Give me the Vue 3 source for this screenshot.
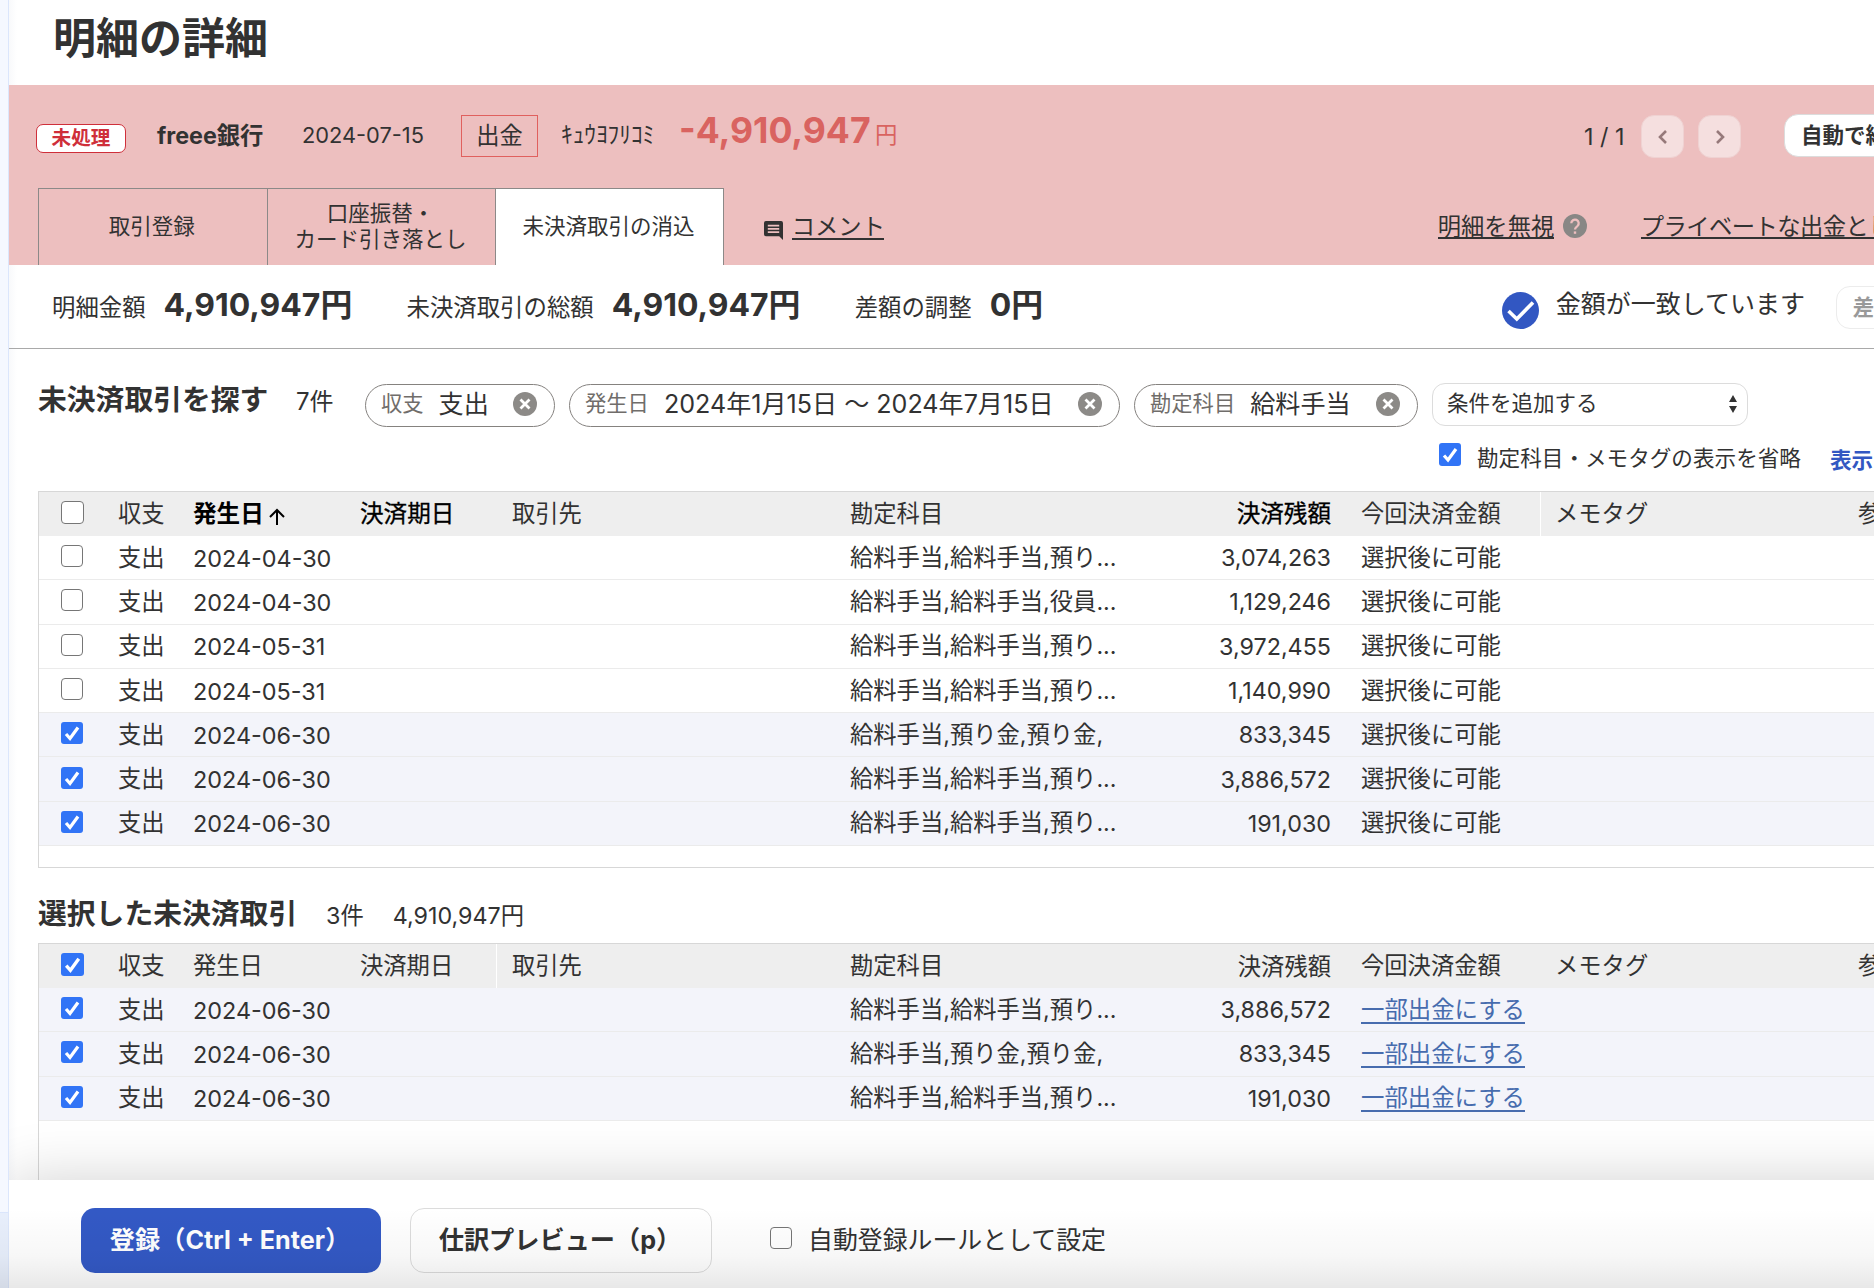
<script setup>
import { ref } from 'vue'

const filters = ref([
  { label: '収支', value: '支出', cls: 'chip-balance' },
  { label: '発生日', value: '2024年1月15日 〜 2024年7月15日', cls: 'chip-date' },
  { label: '勘定科目', value: '給料手当', cls: 'chip-account' },
])

const rows = ref([
  { date: '2024-04-30', account: '給料手当,給料手当,預り...', amount: '3,074,263', checked: false },
  { date: '2024-04-30', account: '給料手当,給料手当,役員...', amount: '1,129,246', checked: false },
  { date: '2024-05-31', account: '給料手当,給料手当,預り...', amount: '3,972,455', checked: false },
  { date: '2024-05-31', account: '給料手当,給料手当,預り...', amount: '1,140,990', checked: false },
  { date: '2024-06-30', account: '給料手当,預り金,預り金,', amount: '833,345', checked: true },
  { date: '2024-06-30', account: '給料手当,給料手当,預り...', amount: '3,886,572', checked: true },
  { date: '2024-06-30', account: '給料手当,給料手当,預り...', amount: '191,030', checked: true },
])

const selected = ref([
  { date: '2024-06-30', account: '給料手当,給料手当,預り...', amount: '3,886,572' },
  { date: '2024-06-30', account: '給料手当,預り金,預り金,', amount: '833,345' },
  { date: '2024-06-30', account: '給料手当,給料手当,預り...', amount: '191,030' },
])
</script>

<template>
  <div class="screen">
    <aside class="rail"><div class="rail-foot"></div></aside>

    <main class="main">
      <h1>明細の詳細</h1>

      <section class="statement">
        <div class="info">
          <span class="badge">未処理</span>
          <strong class="bank">freee銀行</strong>
          <span class="date">2024-07-15</span>
          <span class="kind">出金</span>
          <span class="memo">ｷｭｳﾖﾌﾘｺﾐ</span>
          <span class="amount">-4,910,947</span>
          <span class="yen">円</span>
          <span class="page">1 / 1</span>
          <button class="nav">
            <svg viewBox="0 0 24 24"><path d="M15 6l-6 6 6 6" /></svg>
          </button>
          <button class="nav">
            <svg viewBox="0 0 24 24"><path d="M9 6l6 6-6 6" /></svg>
          </button>
          <button class="auto">自動で経</button>
        </div>

        <div class="tabs">
          <div class="tab">取引登録</div>
          <div class="tab">口座振替・<br />カード引き落とし</div>
          <div class="tab active">未決済取引の消込</div>
          <svg class="comment-icon" viewBox="0 0 20 20">
            <path fill-rule="evenodd" d="M2 0h16a2 2 0 0 1 2 2v18l-4-4H2a2 2 0 0 1-2-2V2a2 2 0 0 1 2-2zM4 4v1.800h12V4zM4 7.400v1.800h12V7.400zM4 10.800v1.800h12v-1.800z" />
          </svg>
          <a class="comment">コメント</a>
          <a class="ignore">明細を無視</a>
          <svg class="help" viewBox="0 0 24 24">
            <circle cx="12" cy="12" r="12" />
            <path d="M8.300 9.300a3.700 3.700 0 1 1 6.200 2.700c-1.400 1.200-2.500 1.700-2.500 3.600" />
            <rect x="10.800" y="17.400" width="2.400" height="2.400" />
          </svg>
          <a class="private">プライベートな出金とし</a>
        </div>
      </section>

      <section class="summary">
        <span class="label">明細金額</span>
        <strong>4,910,947円</strong>
        <span class="label">未決済取引の総額</span>
        <strong>4,910,947円</strong>
        <span class="label">差額の調整</span>
        <strong>0円</strong>
        <svg class="ok" viewBox="0 0 37 37">
          <circle cx="18.500" cy="18.500" r="18.500" />
          <path d="M6.500 19l8.300 8L31 10.500" />
        </svg>
        <span class="match">金額が一致しています</span>
        <button class="adjust">差</button>
      </section>

      <section class="search">
        <h2>未決済取引を探す</h2>
        <span class="count">7件</span>
        <div v-for="f in filters" :key="f.label" class="chip" :class="f.cls">
          <small>{{ f.label }}</small>
          <span>{{ f.value }}</span>
          <svg viewBox="0 0 24 24">
            <circle cx="12" cy="12" r="12" />
            <path d="M7.500 7.500l9 9M16.500 7.500l-9 9" />
          </svg>
        </div>
        <div class="select">
          条件を追加する
          <svg viewBox="0 0 8 18"><path d="M4 0l4 7H0zM4 18l4-7H0z" /></svg>
        </div>
      </section>

      <div class="options">
        <span class="check on"><svg viewBox="0 0 22 22"><path d="M5 12l4 4.500L17 5.500" /></svg></span>
        <span class="omit">勘定科目・メモタグの表示を省略</span>
        <a>表示</a>
      </div>

      <div class="table candidates">
        <div class="row head">
          <span class="check big"></span>
          <span>収支</span>
          <span class="sorted">発生日<svg viewBox="0 0 16 17"><path d="M8 17V2M1 9l7-7 7 7" /></svg></span>
          <span class="due">決済期日</span>
          <span>取引先</span>
          <span>勘定科目</span>
          <span class="num due">決済残額</span>
          <span class="divided">今回決済金額</span>
          <span>メモタグ</span>
          <span>参</span>
        </div>
        <div v-for="(row, i) in rows" :key="i" class="row" :class="{ picked: row.checked }">
          <span class="check" :class="{ on: row.checked }">
            <svg v-if="row.checked" viewBox="0 0 22 22"><path d="M5 12l4 4.500L17 5.500" /></svg>
          </span>
          <span>支出</span>
          <span class="day">{{ row.date }}</span>
          <span></span>
          <span></span>
          <span>{{ row.account }}</span>
          <span class="num">{{ row.amount }}</span>
          <span>選択後に可能</span>
        </div>
      </div>

      <div class="chosen">
        <h2>選択した未決済取引</h2>
        <span>3件</span>
        <span class="total">4,910,947円</span>
      </div>

      <div class="table selection">
        <div class="row head">
          <span class="check on big"><svg viewBox="0 0 22 22"><path d="M5 12l4 4.500L17 5.500" /></svg></span>
          <span>収支</span>
          <span>発生日</span>
          <span class="divided">決済期日</span>
          <span>取引先</span>
          <span>勘定科目</span>
          <span class="num">決済残額</span>
          <span>今回決済金額</span>
          <span>メモタグ</span>
          <span>参</span>
        </div>
        <div v-for="(row, i) in selected" :key="i" class="row picked">
          <span class="check on"><svg viewBox="0 0 22 22"><path d="M5 12l4 4.500L17 5.500" /></svg></span>
          <span>支出</span>
          <span class="day">{{ row.date }}</span>
          <span></span>
          <span></span>
          <span>{{ row.account }}</span>
          <span class="num">{{ row.amount }}</span>
          <a class="partial">一部出金にする</a>
        </div>
      </div>

      <footer class="footer">
        <button class="primary">登録（Ctrl + Enter）</button>
        <button class="preview">仕訳プレビュー（p）</button>
        <span class="check"></span>
        <span class="rule">自動登録ルールとして設定</span>
      </footer>
    </main>
    <div class="bottom-shade"></div>
  </div>
</template>

<style>
body {
  margin: 0;
  overflow: hidden;
}
</style>

<style scoped>
.screen {
  position: relative;
  display: flex;
  width: 1874px;
  height: 1288px;
  overflow: hidden;
  background: #fff;
  color: #323232;
  font-family: Inter, 'Noto Sans CJK JP', sans-serif;
  font-size: 23.3px;
  line-height: 1.2;
  white-space: nowrap;
}
.screen * {
  box-sizing: border-box;
}
button {
  font: inherit;
  color: inherit;
  padding: 0;
}
h1,
h2 {
  margin: 0;
}
.rail {
  display: flex;
  align-items: flex-end;
  width: 9px;
  flex: none;
  background: #f5f8ff;
  border-right: 1px solid #dbe6fc;
}
.rail-foot {
  width: 100%;
  height: 76px;
  background: #e8effc;
  border-top: 1px solid #dbe6fc;
}
.main {
  display: flex;
  flex-direction: column;
  width: 1865px;
  flex: none;
  overflow: hidden;
  background: linear-gradient(90deg, #f8f9fb, #fff 8px);
}
h1 {
  height: 85px;
  flex: none;
  padding-left: 44px;
  font-size: 43px;
  line-height: 77px;
}
.statement {
  height: 180px;
  flex: none;
  background: #edbfbf;
}
.info {
  display: flex;
  align-items: center;
  height: 103px;
  padding: 0 0 2px 27px;
}
.info > * {
  flex: none;
}
.badge {
  width: 90px;
  height: 29px;
  margin: 6px 31px 0 0;
  border: 1px solid #cf2f3a;
  border-radius: 7px;
  background: #fff;
  color: #cf2f3a;
  font-size: 19.6px;
  font-weight: 700;
  line-height: 26px;
  text-align: center;
}
.bank {
  width: 145px;
  font-size: 23.3px;
}
.date {
  width: 159px;
  font-size: 21.8px;
}
.kind {
  width: 77px;
  height: 42px;
  border: 1px solid #e0605e;
  line-height: 40px;
  text-align: center;
}
.memo {
  width: 141px;
  padding-left: 23px;
  margin-top: -2px;
}
.amount {
  width: 196px;
  margin-top: -8px;
  color: #d96360;
  font-size: 35.6px;
  font-weight: 700;
}
.yen {
  width: 709px;
  color: #d96360;
  font-size: 22.4px;
}
.page {
  width: 57px;
  margin-top: 3px;
}
.nav {
  display: grid;
  place-items: center;
  width: 43px;
  height: 43px;
  margin: 2px 14px 0 0;
  border: 1px solid #efd2d2;
  border-radius: 13px;
  background: #f5dfdf;
}
.nav svg {
  width: 24px;
  height: 24px;
  fill: none;
  stroke: #96797a;
  stroke-width: 2.6;
}
.auto,
.adjust {
  width: 150px;
  height: 43px;
  border: 1px solid #dcdcdc;
  border-radius: 14px;
  background: #fff;
  font-size: 21.5px;
  font-weight: 700;
  line-height: 39px;
  text-align: left;
  padding-left: 16px;
}
.auto {
  margin-left: 29px;
}
.tabs {
  display: flex;
  height: 77px;
  padding-left: 29px;
}
.tabs > * {
  flex: none;
}
.tab {
  display: grid;
  place-items: center;
  width: 228.6px;
  padding: 0 2px 3px 0;
  border: 1px solid #8c8988;
  border-width: 1px 0 0 1px;
  font-size: 21.5px;
  line-height: 26px;
  text-align: center;
}
.tab.active {
  border-right-width: 1px;
  background: #fff;
}
.comment-icon {
  width: 19px;
  height: 19px;
  margin: 33px 9px 0 40px;
  fill: #323232;
}
.comment,
.ignore,
.private {
  height: 52px;
  border-bottom: 2px solid #323232;
  line-height: 78px;
}
.comment {
  width: 92px;
}
.ignore {
  width: 116px;
  margin-left: 554px;
  height: 51px;
}
.private {
  height: 51px;
  letter-spacing: -0.55px;
}
.help {
  width: 24px;
  height: 24px;
  margin: 26px 54px 0 9px;
  fill: #888785;
}
.help path {
  fill: none;
  stroke: #edbfbf;
  stroke-width: 2.3;
}
.help rect {
  fill: #edbfbf;
}
.summary {
  display: flex;
  height: 84px;
  flex: none;
  align-items: center;
  padding-left: 43px;
  border-bottom: 1px solid #a9a9a9;
}
.summary > * {
  flex: none;
}
.summary .label {
  margin: 4px 18px 0 0;
  font-size: 23.4px;
}
.summary strong {
  width: 243px;
  font-size: 31.9px;
  margin-top: -3px;
}
.summary strong:nth-of-type(3) {
  width: 512px;
}
.ok {
  width: 37px;
  height: 37px;
  margin: 7px 17px 0 0;
  fill: #3257c2;
}
.ok path {
  fill: none;
  stroke: #fff;
  stroke-width: 3.6;
}
.match {
  width: 280px;
  margin-top: -5px;
  font-size: 25px;
}
.adjust {
  margin-top: 1px;
  border-color: #ececec;
  color: #999;
}
.search {
  display: flex;
  height: 82px;
  flex: none;
  align-items: center;
  padding: 30px 0 0 29px;
}
.search > * {
  flex: none;
}
h2 {
  font-size: 28.8px;
  line-height: 34px;
}
.search h2 {
  width: 258px;
  margin-top: -11px;
}
.count {
  width: 69px;
  margin-top: -6px;
  font-size: 24px;
}
.chip {
  display: flex;
  align-items: center;
  height: 43px;
  margin: 0 14px 0 0;
  padding-left: 15px;
  border: 1px solid #85827f;
  border-radius: 22px;
  background: #fff;
}
.chip small {
  margin: -3px 15px 0 0;
  color: #706d6a;
  font-size: 21.3px;
}
.chip span {
  flex: 1;
  margin-top: -1px;
  font-size: 25.1px;
}
.chip svg {
  width: 24px;
  height: 24px;
  margin: -3px 17px 0 0;
  fill: #8c8a87;
}
.chip path {
  fill: none;
  stroke: #fff;
  stroke-width: 2.8;
}
.chip-balance {
  width: 190px;
}
.chip-date {
  width: 551px;
}
.chip-account {
  width: 284px;
}
.select {
  display: flex;
  align-items: center;
  justify-content: space-between;
  width: 316px;
  height: 43px;
  margin-top: -2px;
  padding: 0 10px 1px 14px;
  border: 1px solid #dcdcdc;
  border-radius: 13px;
  background: #fff;
  font-size: 21.5px;
}
.select svg {
  width: 8px;
  height: 18px;
  fill: #323232;
}
.options {
  display: flex;
  height: 60px;
  flex: none;
  align-items: flex-start;
  padding: 12px 0 0 1430px;
  font-size: 21.6px;
}
.options .omit {
  width: 353px;
  flex: none;
  margin: 3px 0 0 16px;
}
.options a {
  flex: none;
  margin-top: 5px;
  color: #3257c2;
  font-weight: 700;
}
.check {
  display: inline-block;
  width: 22px;
  height: 22px;
  flex: none;
  border: 1.5px solid #767676;
  border-radius: 4px;
  background: #fff;
}
.check.big {
  width: 23px;
  height: 23px;
}
.check.on {
  border: none;
  border-radius: 3px;
  background: #3174f6;
}
.options .check {
  height: 23px;
}
.check svg {
  display: block;
  width: 100%;
  height: 100%;
  fill: none;
  stroke: #fff;
  stroke-width: 3.2;
}
.table {
  flex: none;
  margin-left: 29px;
  border: 1px solid #d7d7d7;
  border-right: none;
  background: #fff;
}
.candidates {
  height: 377px;
}
.selection {
  height: 300px;
}
.row {
  display: grid;
  grid-template-columns: 79px 75px 167px 152px 338px 481px 30px 194px 303px 60px;
  align-items: center;
  height: 44.3px;
  border-bottom: 1px solid #ebebeb;
}
.row > :nth-child(6) {
  grid-column: 6;
  grid-row: 1;
}
.row > :nth-child(7) {
  grid-column: 6;
  grid-row: 1;
}
.row > :nth-child(8) {
  grid-column: 8;
}
.row.head {
  height: 44px;
  border: none;
  background: #eee;
}
.row .check {
  margin: 0 0 3px 21.5px;
}
.row .day {
  padding-top: 2px;
  font-size: 23.4px;
}
.num {
  padding-top: 1px;
  text-align: right;
}
.picked {
  background: #f3f4fa;
}
.divided {
  height: 44px;
  line-height: 44px;
  border-right: 1px solid #fff;
}
.candidates .divided {
  width: 180px;
}
.selection .divided {
  width: 137px;
}
.sorted {
  color: #000;
  font-size: 23.6px;
  font-weight: 700;
}
.sorted svg {
  width: 16px;
  height: 17px;
  margin-left: 5px;
  vertical-align: -3px;
  fill: none;
  stroke: #000;
  stroke-width: 2;
}
.due {
  color: #000;
  font-size: 23.6px;
  -webkit-text-stroke: 0.3px #000;
}
.partial {
  justify-self: start;
  height: 28px;
  border-bottom: 2px solid #476cae;
  color: #476cae;
  font-size: 23.4px;
  line-height: 28px;
}
.chosen {
  display: flex;
  flex: none;
  align-items: baseline;
  height: 75px;
  padding: 29px 0 0 29px;
}
.chosen h2 {
  width: 288px;
}
.chosen .total {
  margin-left: 29px;
}
.footer {
  position: absolute;
  left: 9px;
  right: -70px;
  bottom: 0;
  display: flex;
  align-items: flex-start;
  height: 108px;
  padding: 28px 0 0 72px;
  background: #fff;
  box-shadow: 0 0 60px rgba(0, 0, 0, 0.18);
  clip-path: inset(-70px 0 0 0);
}
.footer button {
  width: 300px;
  height: 65px;
  border: none;
  border-radius: 14px;
  font-size: 25.2px;
  font-weight: 700;
}
.footer .primary {
  margin-right: 29px;
  padding-right: 2px;
  background: #3359c5;
  color: #fff;
}
.footer .preview {
  width: 302px;
  padding-right: 2px;
  border: 1px solid #dcdcdc;
  background: #fff;
}
.footer .check {
  margin: 19px 16px 0 58px;
}
.rule {
  margin-top: 18px;
  font-size: 24.9px;
}
.bottom-shade {
  position: absolute;
  left: 0;
  right: 0;
  bottom: 0;
  height: 80px;
  background: linear-gradient(rgba(0, 0, 0, 0), rgba(0, 0, 0, 0.03) 60%, rgba(0, 0, 0, 0.09));
  pointer-events: none;
}
</style>
